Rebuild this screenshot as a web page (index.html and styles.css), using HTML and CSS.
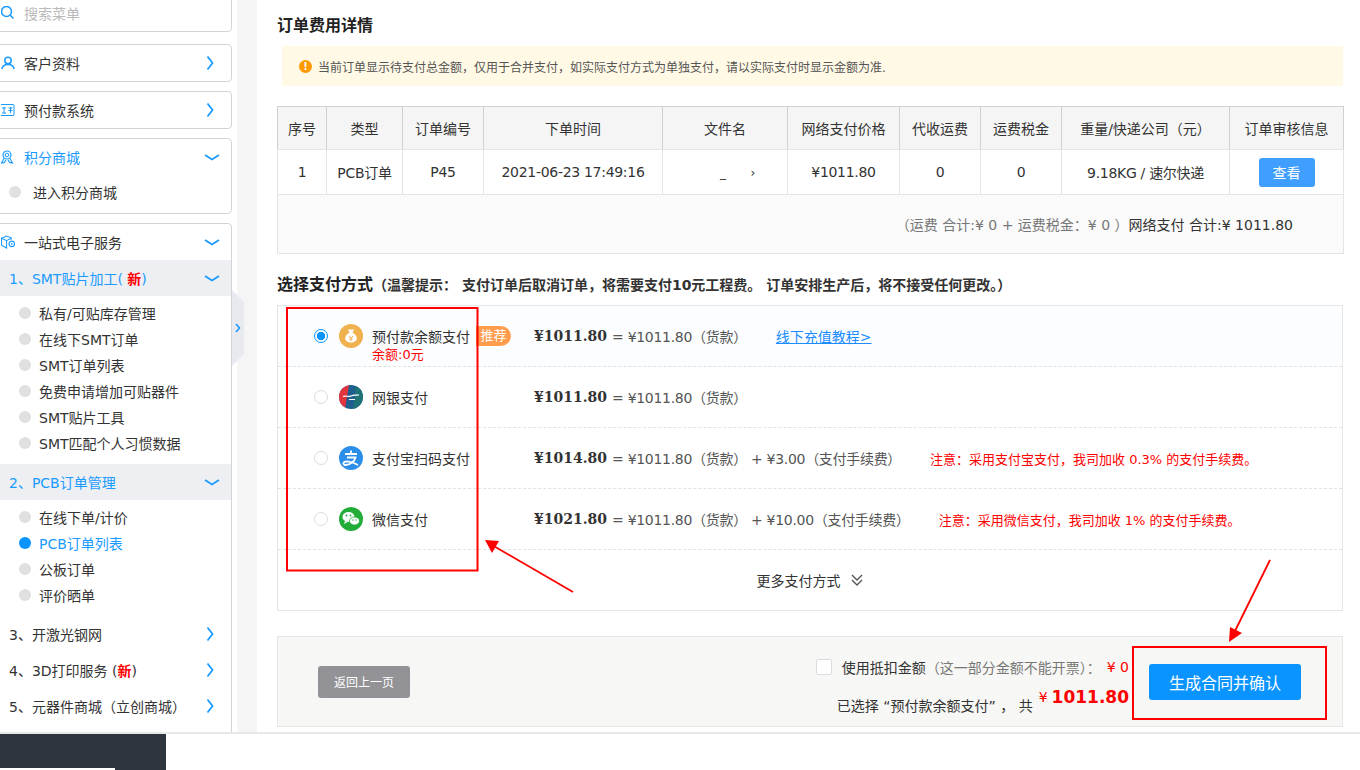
FILE: index.html
```html
<!DOCTYPE html>
<html lang="zh-CN">
<head>
  <meta charset="UTF-8">
  <meta name="viewport" content="width=device-width, initial-scale=1.0">
  <title>订单费用详情</title>
  <link rel="stylesheet" href="styles.css">
</head>
<body>
  <div class="page">
    <aside class="sidebar">
      <div class="card search-card">
        <div class="card-head">
          <svg class="side-icon" viewBox="0 0 14 14"><circle cx="5.5" cy="5.5" r="5" fill="none" stroke="#1a9bff" stroke-width="1.5"/><path d="M9 9l3.5 3.5" stroke="#1a9bff" stroke-width="1.5" fill="none"/></svg>
          <span class="search-text">搜索菜单</span>
        </div>
      </div>
      <div class="card">
        <div class="card-head">
          <svg class="side-icon" viewBox="0 0 14 14"><circle cx="7" cy="4.5" r="3.2" fill="none" stroke="#1a9bff" stroke-width="1.5"/><path d="M0.8 13c.6-3 3-4.6 6.2-4.6s5.600 1.600 6.200 4.600" fill="none" stroke="#1a9bff" stroke-width="1.5"/></svg>
          <span class="head-text">客户资料</span>
          <svg class="chev-right" viewBox="0 0 8 16"><path d="M1.500 1.500L6.500 8l-5 6.500" fill="none" stroke="#1a9bff" stroke-width="1.800"/></svg>
        </div>
      </div>
      <div class="card">
        <div class="card-head">
          <svg class="side-icon" viewBox="0 0 14 14"><rect x="-1" y="1.500" width="14" height="11" rx="1" fill="none" stroke="#1a9bff" stroke-width="1"/><path d="M1 5h4M3 4v6M1 10h4M7.500 5h4M9.500 4v6M7.500 7.500h4" stroke="#1a9bff" stroke-width="1" fill="none"/></svg>
          <span class="head-text">预付款系统</span>
          <svg class="chev-right" viewBox="0 0 8 16"><path d="M1.500 1.500L6.500 8l-5 6.500" fill="none" stroke="#1a9bff" stroke-width="1.800"/></svg>
        </div>
      </div>
      <div class="card">
        <div class="card-head active">
          <svg class="side-icon" viewBox="0 0 14 14"><circle cx="6" cy="5" r="4" fill="none" stroke="#1a9bff" stroke-width="1.200"/><circle cx="6" cy="5" r="1.800" fill="none" stroke="#1a9bff" stroke-width="1"/><path d="M3 8.500L0.500 13l3-.6L5 10M9 8.500l2.500 4.500-3-.6L7 10" fill="none" stroke="#1a9bff" stroke-width="1.100"/></svg>
          <span class="head-text">积分商城</span>
          <svg class="chev-down" viewBox="0 0 16 7"><path d="M1 1l7 4.500L15 1" fill="none" stroke="#1a9bff" stroke-width="1.800"/></svg>
        </div>
        <ul class="sub-list shallow">
          <li><i class="dot"></i>进入积分商城</li>
        </ul>
      </div>
      <div class="card">
        <div class="card-head">
          <svg class="side-icon" viewBox="0 0 15 15"><path d="M0.500 3.500L6 1l5 2v2M0.500 3.500V11L6 14V6L0.500 3.500zM6 6l5-2.500" fill="none" stroke="#1a9bff" stroke-width="1.100"/><circle cx="11.500" cy="9.500" r="3" fill="none" stroke="#1a9bff" stroke-width="1.200"/><circle cx="11.500" cy="9.500" r="1" fill="#1a9bff"/></svg>
          <span class="head-text">一站式电子服务</span>
          <svg class="chev-down" viewBox="0 0 16 7"><path d="M1 1l7 4.500L15 1" fill="none" stroke="#1a9bff" stroke-width="1.800"/></svg>
        </div>
        <div class="section-head open">
          <span>1、SMT贴片加工( <b class="new">新</b>)</span>
          <svg class="chev-down" viewBox="0 0 16 7"><path d="M1 1l7 4.500L15 1" fill="none" stroke="#1a9bff" stroke-width="1.800"/></svg>
        </div>
        <ul class="sub-list">
          <li><i class="dot"></i>私有/可贴库存管理</li>
          <li><i class="dot"></i>在线下SMT订单</li>
          <li><i class="dot"></i>SMT订单列表</li>
          <li><i class="dot"></i>免费申请增加可贴器件</li>
          <li><i class="dot"></i>SMT贴片工具</li>
          <li><i class="dot"></i>SMT匹配个人习惯数据</li>
        </ul>
        <div class="section-head open">
          <span>2、PCB订单管理</span>
          <svg class="chev-down" viewBox="0 0 16 7"><path d="M1 1l7 4.500L15 1" fill="none" stroke="#1a9bff" stroke-width="1.800"/></svg>
        </div>
        <ul class="sub-list">
          <li><i class="dot"></i>在线下单/计价</li>
          <li class="current"><i class="dot"></i>PCB订单列表</li>
          <li><i class="dot"></i>公板订单</li>
          <li><i class="dot"></i>评价晒单</li>
        </ul>
        <div class="section-head">
          <span>3、开激光钢网</span>
          <svg class="chev-right" viewBox="0 0 8 16"><path d="M1.500 1.500L6.500 8l-5 6.500" fill="none" stroke="#1a9bff" stroke-width="1.800"/></svg>
        </div>
        <div class="section-head">
          <span>4、3D打印服务 (<b class="new">新</b>)</span>
          <svg class="chev-right" viewBox="0 0 8 16"><path d="M1.500 1.500L6.500 8l-5 6.500" fill="none" stroke="#1a9bff" stroke-width="1.800"/></svg>
        </div>
        <div class="section-head">
          <span>5、元器件商城（立创商城）</span>
          <svg class="chev-right" viewBox="0 0 8 16"><path d="M1.500 1.500L6.500 8l-5 6.500" fill="none" stroke="#1a9bff" stroke-width="1.800"/></svg>
        </div>
        <div class="section-head">
          <span></span>
          <svg class="chev-right" viewBox="0 0 8 16"><path d="M1.500 1.500L6.500 8l-5 6.500" fill="none" stroke="#1a9bff" stroke-width="1.800"/></svg>
        </div>
      </div>
    </aside>

    <div class="gutter">
      <div class="toggle">
        <svg viewBox="0 0 6 10" width="6" height="10"><path d="M1 1l3.500 4L1 9" fill="none" stroke="#1a9bff" stroke-width="1.600"/></svg>
      </div>
    </div>

    <main class="main">
      <h2 class="title">订单费用详情</h2>
      <div class="notice">
        <span class="notice-icon">!</span>
        当前订单显示待支付总金额，仅用于合并支付，如实际支付方式为单独支付，请以实际支付时显示金额为准.
      </div>

      <table class="fee-table">
        <colgroup>
          <col class="w49"><col class="w76"><col class="w81"><col class="w179"><col class="w125">
          <col class="w112"><col class="w81"><col class="w81"><col class="w168"><col class="w114">
        </colgroup>
        <thead>
          <tr>
            <th>序号</th><th>类型</th><th>订单编号</th><th>下单时间</th><th>文件名</th>
            <th>网络支付价格</th><th>代收运费</th><th>运费税金</th><th>重量/快递公司（元）</th><th>订单审核信息</th>
          </tr>
        </thead>
        <tbody>
          <tr>
            <td>1</td><td>PCB订单</td><td>P45</td><td>2021-06-23 17:49:16</td>
            <td class="file-cell"><span>_</span><span>›</span></td>
            <td>¥1011.80</td><td>0</td><td>0</td><td>9.18KG / 速尔快递</td>
            <td><button class="view-btn">查看</button></td>
          </tr>
          <tr>
            <td class="sum-cell" colspan="10"><span class="muted">（运费 合计:¥ 0 + 运费税金：¥ 0 ）</span>网络支付 合计:¥ 1011.80</td>
          </tr>
        </tbody>
      </table>

      <h3 class="pay-title">选择支付方式<span class="pay-hint">（温馨提示： 支付订单后取消订单，将需要支付10元工程费。 订单安排生产后，将不接受任何更改。）</span></h3>

      <div class="pay-list">
        <div class="pay-row selected">
          <div class="pay-method">
            <i class="radio on"></i>
            <svg class="pay-icon" viewBox="0 0 24 24"><circle cx="12" cy="12" r="12" fill="#f0b14f"/><path d="M9 5.500h6l-1.500 3.200c2.800 1.200 4.300 3.300 4.300 5.600 0 2.700-2.300 4.200-5.800 4.200s-5.800-1.500-5.800-4.200c0-2.300 1.500-4.400 4.300-5.600L9 5.500z" fill="#fff"/><path d="M10 12l2 2.300 2-2.300M12 14.300V17M10.300 15h3.400" fill="none" stroke="#f0b14f" stroke-width="1"/></svg>
            <div class="method-name">预付款余额支付<span class="balance">余额:0元</span></div>
            <span class="tag">推荐</span>
          </div>
          <b class="price">¥1011.80</b><span class="calc">= ¥1011.80（货款）</span>
          <a class="tutorial" href="#">线下充值教程&gt;</a>
        </div>
        <div class="pay-row">
          <div class="pay-method">
            <i class="radio"></i>
            <svg class="pay-icon" viewBox="0 0 24 24"><defs><clipPath id="bankClip"><circle cx="12" cy="12" r="12"/></clipPath></defs><g clip-path="url(#bankClip)"><rect width="24" height="24" fill="#1e5f8f"/><path d="M0 0h10L6 24H0z" fill="#e2343f"/><path d="M17 0h7v24h-10z" fill="#1f7275"/></g><path d="M4 11.500c3-1.500 5 1 8-.5s5-.5 8-1" fill="none" stroke="#fff" stroke-width="1.200"/><path d="M10 14.500h6" stroke="#fff" stroke-width="1"/></svg>
            <div class="method-name">网银支付</div>
          </div>
          <b class="price">¥1011.80</b><span class="calc">= ¥1011.80（货款）</span>
        </div>
        <div class="pay-row">
          <div class="pay-method">
            <i class="radio"></i>
            <svg class="pay-icon" viewBox="0 0 24 24"><circle cx="12" cy="12" r="12" fill="#2b8ee8"/><path d="M6 8h12M12 4.500V8M8 11.500h8.500c-1.200 4.500-4.500 7-10 7.500-1.500 0-2.500-1-2-2.200 1-2.300 8-1.500 14.500 2.200" fill="none" stroke="#fff" stroke-width="1.800"/></svg>
            <div class="method-name">支付宝扫码支付</div>
          </div>
          <b class="price">¥1014.80</b><span class="calc">= ¥1011.80（货款） + ¥3.00（支付手续费）</span>
          <span class="warn">注意：采用支付宝支付，我司加收 0.3% 的支付手续费。</span>
        </div>
        <div class="pay-row">
          <div class="pay-method">
            <i class="radio"></i>
            <svg class="pay-icon" viewBox="0 0 24 24"><circle cx="12" cy="12" r="12" fill="#22ac38"/><ellipse cx="9.500" cy="10" rx="6" ry="5" fill="#fff"/><path d="M6 14l-1 3 3.500-2z" fill="#fff"/><ellipse cx="15.500" cy="14" rx="5" ry="4" fill="#fff" stroke="#22ac38" stroke-width=".8"/><circle cx="7.500" cy="8.500" r=".9" fill="#22ac38"/><circle cx="11.500" cy="8.500" r=".9" fill="#22ac38"/><circle cx="14" cy="13" r=".7" fill="#22ac38"/><circle cx="17" cy="13" r=".7" fill="#22ac38"/></svg>
            <div class="method-name">微信支付</div>
          </div>
          <b class="price">¥1021.80</b><span class="calc">= ¥1011.80（货款） + ¥10.00（支付手续费）</span>
          <span class="warn">注意：采用微信支付，我司加收 1% 的支付手续费。</span>
        </div>
        <div class="pay-more">
          更多支付方式
          <svg viewBox="0 0 14 14" width="14" height="14"><path d="M2 2l5 5 5-5M2 7l5 5 5-5" fill="none" stroke="#555" stroke-width="1.400"/></svg>
        </div>
      </div>

      <div class="confirm-bar">
        <button class="back-btn">返回上一页</button>
        <div class="confirm-info">
          <div class="confirm-line">
            <i class="check"></i>使用抵扣金额<span class="muted">（这一部分金额不能开票）：</span><span class="red deduct">¥ 0</span>
          </div>
          <div class="confirm-line">
            已选择 “预付款余额支付” ， 共<span class="red deduct">¥</span><b class="red total">1011.80</b>
          </div>
        </div>
        <button class="confirm-btn">生成合同并确认</button>
      </div>
    </main>
  </div>

  <footer class="footer">
    <div class="footer-dark"><div class="footer-line"></div></div>
  </footer>

  <!-- red marks someone drew on the screenshot -->
  <svg class="marks" viewBox="0 0 1360 770">
    <rect x="287" y="308" width="190.500" height="262.500" fill="none" stroke="#f00" stroke-width="2"/>
    <rect x="1133" y="647" width="193" height="72" fill="none" stroke="#f00" stroke-width="2"/>
    <path d="M573 592L492 545" stroke="#f00" stroke-width="1.800" fill="none"/>
    <path d="M485 540l14 1-7 12z" fill="#f00"/>
    <path d="M1270 560L1235 631" stroke="#f00" stroke-width="1.800" fill="none"/>
    <path d="M1229 642l1-15 12 6z" fill="#f00"/>
  </svg>
</body>
</html>
```

FILE: styles.css
```css
* {
  margin: 0;
  padding: 0;
  box-sizing: border-box;
}
html, body {
  height: 770px;
  overflow: hidden;
}
body {
  position: relative;
  background-color: #fff;
  color: #333;
  font-family: "DejaVu Sans", "Noto Sans CJK SC", sans-serif;
  font-size: 14px;
}
ul {
  list-style: none;
}
button {
  border: none;
  font-family: inherit;
  cursor: pointer;
}
.page {
  display: flex;
  height: 732px;
  overflow: hidden;
}

/* sidebar */
.sidebar {
  flex: 0 0 237px;
  margin-top: -6px;
  padding-right: 5px;
  overflow: hidden;
}
.card {
  margin-left: -10px;
  margin-bottom: 9px;
  border: 1px solid #d4d4d4;
  border-radius: 4px;
  background-color: #fff;
}
.search-card {
  margin-bottom: 12px;
}
.card-head {
  display: flex;
  align-items: center;
  height: 36px;
  padding-left: 10px;
  padding-right: 17px;
}
.side-icon {
  flex: none;
  width: 14px;
  height: 14px;
  margin-right: 9px;
}
.head-text {
  flex: 1;
  white-space: nowrap;
}
.search-text {
  color: #b9b9b9;
}
.active .head-text {
  color: #1a9bff;
}
.chev-right {
  flex: none;
  width: 8px;
  height: 16px;
}
.chev-down {
  flex: none;
  width: 16px;
  height: 7px;
  margin-right: -6px;
}
.section-head {
  display: flex;
  align-items: center;
  justify-content: space-between;
  height: 36px;
  padding-left: 18px;
  padding-right: 17px;
  white-space: nowrap;
}
.section-head.open {
  background-color: #eeeff3;
  color: #1a9bff;
}
.new {
  color: #f00;
}
.sub-list {
  padding: 4px 0 8px 28px;
}
.sub-list.shallow {
  padding-left: 18px;
}
.sub-list li {
  display: flex;
  align-items: center;
  height: 26px;
  white-space: nowrap;
}
.sub-list .current {
  color: #1a9bff;
}
.dot {
  flex: none;
  width: 12px;
  height: 12px;
  margin-right: 8px;
  border-radius: 50%;
  background-color: #e0e0e0;
}
.shallow .dot {
  margin-right: 12px;
}
.current .dot {
  background-color: #0a94ff;
}
.gutter {
  position: relative;
  flex: 0 0 20px;
  background-color: #f5f5f5;
}
.toggle {
  position: absolute;
  top: 290px;
  left: -5px;
  display: flex;
  align-items: center;
  width: 12px;
  height: 76px;
  padding-left: 3px;
  background-color: #e9eaef;
  clip-path: polygon(0 0, 100% 12px, 100% 64px, 0 100%);
}

/* main column */
.main {
  flex: 1;
  min-width: 0;
  padding: 16px 17px 0 20px;
}
.title {
  font-size: 16px;
  line-height: 20px;
  color: #222;
}
.notice {
  display: flex;
  align-items: center;
  height: 40px;
  margin: 10px 0 20px 5px;
  padding-left: 17px;
  background-color: #fff9e6;
  color: #555;
  font-size: 12px;
}
.notice-icon {
  flex: none;
  width: 13px;
  height: 13px;
  margin-right: 6px;
  border-radius: 50%;
  background-color: #f90;
  color: #fff;
  font-size: 10px;
  font-weight: bold;
  line-height: 13px;
  text-align: center;
}
.fee-table {
  width: 1066px;
  table-layout: fixed;
  border-collapse: collapse;
  text-align: center;
}
.w49 { width: 49px; }
.w76 { width: 76px; }
.w81 { width: 81px; }
.w179 { width: 179px; }
.w125 { width: 125px; }
.w112 { width: 112px; }
.w168 { width: 168px; }
.w114 { width: 114px; }
.fee-table th {
  height: 43px;
  border: 1px solid #d0d0d0;
  border-bottom-color: #e5e5e5;
  background-color: #f5f5f5;
  font-weight: normal;
}
.fee-table td {
  height: 45px;
  border: 1px solid #e5e5e5;
  letter-spacing: -0.3px;
}
.file-cell span {
  display: inline-block;
  font-size: 12px;
  margin-left: 25px;
}
.view-btn {
  width: 56px;
  height: 29px;
  border-radius: 3px;
  background-color: #409eff;
  color: #fff;
  font-size: 14px;
}
.fee-table .sum-cell {
  height: 59px;
  padding-right: 50px;
  background-color: #fafafa;
  text-align: right;
  letter-spacing: 0;
}
.muted {
  color: #777;
}
.pay-title {
  margin: 21px 0 10px;
  font-size: 16px;
  line-height: 20px;
  color: #222;
}
.pay-hint {
  font-size: 14px;
  color: #333;
}
.pay-list {
  width: 1066px;
  border: 1px solid #e5e5e5;
}
.pay-row {
  display: flex;
  align-items: center;
  height: 61px;
  border-bottom: 1px dashed #e2e2e2;
}
.pay-row.selected {
  background-color: #fbfdff;
}
.pay-method {
  display: flex;
  align-items: center;
  flex: 0 0 256px;
  padding-left: 36px;
}
.radio {
  flex: none;
  width: 14px;
  height: 14px;
  margin-right: 11px;
  border: 1px solid #dcdcdc;
  border-radius: 50%;
  background-color: #fff;
}
.radio.on {
  border-color: #0a94ff;
  background: radial-gradient(circle, #0a94ff 0 4px, #fff 4.500px);
}
.pay-icon {
  flex: none;
  width: 24px;
  height: 24px;
  margin-right: 9px;
}
.method-name {
  position: relative;
  white-space: nowrap;
}
.balance {
  position: absolute;
  top: 100%;
  left: 0;
  color: #f00;
  font-size: 13px;
  line-height: 18px;
}
.tag {
  flex: none;
  width: 35px;
  height: 20px;
  margin-left: 6px;
  border-radius: 0 10px 10px 0;
  background-color: #ff9d4d;
  color: #fff;
  font-size: 13px;
  line-height: 20px;
  text-align: center;
}
.price {
  margin-right: 5px;
  font-family: "DejaVu Serif", "Noto Sans CJK SC", serif;
}
.calc {
  color: #555;
  white-space: pre;
  letter-spacing: -0.3px;
}
.tutorial {
  margin-left: 29px;
  color: #1a8cff;
}
.warn {
  margin-left: 29px;
  color: #f00;
  font-size: 13px;
  white-space: nowrap;
}
.pay-more {
  display: flex;
  align-items: center;
  justify-content: center;
  gap: 9px;
  height: 60px;
}
.confirm-bar {
  display: flex;
  align-items: center;
  width: 1066px;
  height: 91px;
  margin-top: 25px;
  padding: 0 41px 0 40px;
  border: 1px solid #e6e6e6;
  background-color: #f7f7f5;
}
.back-btn {
  width: 92px;
  height: 32px;
  border-radius: 3px;
  background-color: #939397;
  color: #fff;
  font-size: 12px;
}
.confirm-info {
  flex: 1;
  display: flex;
  flex-direction: column;
  align-items: flex-end;
  gap: 10px;
  margin-right: 20px;
}
.confirm-line {
  display: flex;
  align-items: center;
  height: 20px;
  white-space: pre;
}
.check {
  width: 16px;
  height: 16px;
  margin-right: 10px;
  border: 1px solid #dcdcdc;
  border-radius: 2px;
  background-color: #fff;
}
.red {
  color: #f00;
}
.deduct {
  margin-left: 6px;
}
.total {
  margin-left: 4px;
  font-size: 17px;
  font-weight: bold;
}
.confirm-btn {
  width: 152px;
  height: 36px;
  border-radius: 3px;
  background-color: #0a94ff;
  color: #fff;
  font-size: 16px;
}

/* footer */
.footer {
  height: 38px;
  border-top: 2px solid #e8e8e8;
}
.footer-dark {
  display: flex;
  flex-direction: column;
  justify-content: flex-end;
  width: 166px;
  height: 100%;
  background-color: #2f353f;
}
.footer-line {
  width: 115px;
  height: 2px;
  background-color: #fff;
}
.marks {
  position: absolute;
  top: 0;
  left: 0;
  width: 1360px;
  height: 770px;
  pointer-events: none;
}
```
